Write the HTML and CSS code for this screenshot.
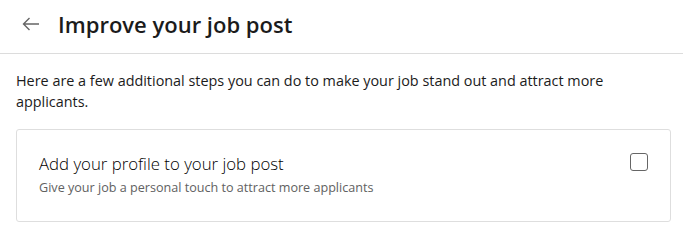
FILE: index.html
```html
<!DOCTYPE html>
<html lang="en">
<head>
<meta charset="utf-8">
<link rel="stylesheet" href="styles.css">
</head>
<body>
<header class="header">
  <button class="back" aria-label="Back">
    <svg width="18" height="14" viewBox="0 0 18 14" fill="none" stroke="#666" stroke-width="1.4">
      <path d="M17 7H1.5M7.5 1L1.5 7l6 6"/>
    </svg>
  </button>
  <h1 class="title">Improve your job post</h1>
</header>
<main class="content">
  <p class="intro">Here are a few additional steps you can do to make your job stand out and attract more applicants.</p>
  <div class="card">
    <div class="card-text">
      <div class="card-title">Add your profile to your job post</div>
      <div class="card-sub">Give your job a personal touch to attract more applicants</div>
    </div>
    <span class="checkbox"></span>
  </div>
</main>
</body>
</html>
```
FILE: styles.css
```css
* { box-sizing: border-box; }
html, body { margin: 0; padding: 0; background: #fff; }
body { font-family: "Open Sans", "Noto Sans", sans-serif; color: #1b1b1b; }
.header {
  display: flex;
  align-items: center;
  height: 54px;
  padding: 0 0 5px 22px;
  border-bottom: 1px solid #dcdcdc;
}
.back {
  border: 0;
  background: none;
  padding: 0;
  width: 18px;
  height: 14px;
  display: flex;
  margin-right: 18px;
}
.title {
  margin: 0;
  font-size: 22px;
  font-weight: 600;
  color: #1b1b1b;
}
.content { padding: 16px 12px 0 16px; }
.intro {
  margin: 0;
  font-size: 14.4px;
  line-height: 21px;
  color: #1b1b1b;
  padding-right: 10px;
}
.card {
  margin-top: 17px;
  border: 1px solid #dedede;
  border-radius: 3px;
  height: 93px;
  display: flex;
  justify-content: space-between;
  align-items: flex-start;
  padding: 22px 22px 0 22px;
}
.card-title {
  font-size: 16.8px;
  font-weight: 300;
  line-height: 23px;
  color: #000;
}
.card-sub {
  margin-top: 4px;
  font-size: 12.6px;
  line-height: 17px;
  color: #616161;
}
.checkbox {
  width: 18px;
  height: 18px;
  border: 1px solid #666;
  border-radius: 3px;
  margin-top: 1px;
}
```
